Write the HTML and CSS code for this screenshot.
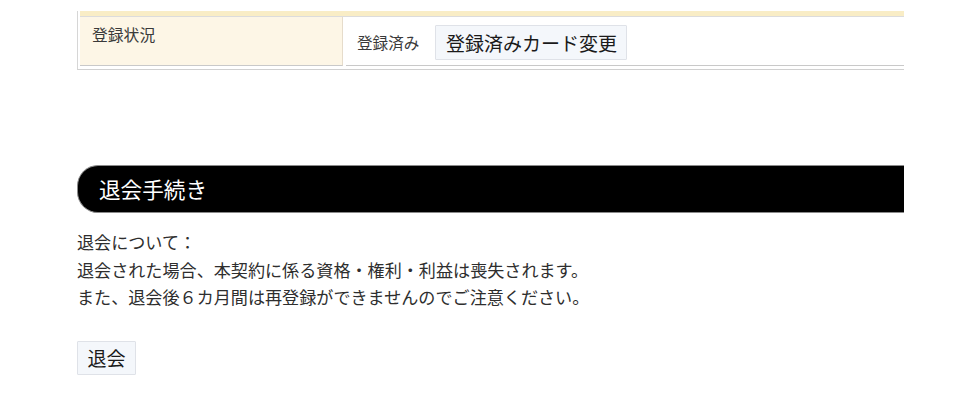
FILE: index.html
```html
<!DOCTYPE html>
<html lang="ja">
<head>
<meta charset="utf-8">
<link rel="stylesheet" href="styles.css">
</head>
<body>
<div class="page">
  <div class="tbl">
    <div class="stripe"></div>
    <div class="row">
      <div class="th">登録状況</div>
      <div class="td">
        <span class="status">登録済み</span>
        <button class="btn btn-card" type="button">登録済みカード変更</button>
      </div>
    </div>
  </div>

  <h2 class="section-title">退会手続き</h2>
  <div class="notice">
    <p>退会について：</p>
    <p>退会された場合、本契約に係る資格・権利・利益は喪失されます。</p>
    <p>また、退会後６カ月間は再登録ができませんのでご注意ください。</p>
  </div>
  <button class="btn btn-quit" type="button">退会</button>
</div>
</body>
</html>
```

FILE: styles.css
```css
* { box-sizing: border-box; }
html, body { margin: 0; padding: 0; background: #fff; }
body {
  font-family: "Noto Sans CJK JP", "Noto Sans", sans-serif;
  color: #333;
  width: 965px;
  height: 419px;
  overflow: hidden;
}
.page {
  padding: 11px 61px 0 77px;
}
.tbl {
  width: 827px;
  border-left: 1px solid #d6d6d6;
  border-bottom: 1px solid #d0d0d0;
  padding: 0 0 3px 2px;
}
.stripe {
  height: 6px;
  background: #f9edc6;
  border-bottom: 1px solid #dcdcdc;
}
.row {
  display: flex;
  gap: 3px;
}
.th {
  width: 263px;
  height: 49px;
  background: #fdf6e6;
  border-right: 1px solid #e6dccb;
  border-bottom: 1px solid #c9c9c9;
  padding: 8px 12px;
  font-size: 15.8px;
  line-height: 20px;
  color: #3a3a3a;
}
.td {
  flex: 1;
  height: 49px;
  border-bottom: 1px solid #c9c9c9;
  display: flex;
  align-items: center;
  gap: 16px;
  padding: 2px 0 0 11px;
}
.status {
  font-size: 15.6px;
  color: #3a3a3a;
}
.btn {
  font-family: "Noto Sans CJK JP", "Noto Sans", sans-serif;
  background: #f4f7fb;
  border: 1px solid #dfe2e8;
  border-radius: 1px;
  color: #1a1a1a;
  padding: 0;
  margin: 0;
  cursor: pointer;
}
.btn-card {
  width: 192px;
  height: 35px;
  font-size: 19px;
  line-height: 33px;
}
.section-title {
  margin: 95px 0 0 0;
  width: 827px;
  height: 48px;
  background: #000;
  border: 1px solid #8a8a8a;
  border-right: none;
  border-radius: 21px 0 0 21px;
  color: #fff;
  font-weight: normal;
  font-size: 21.6px;
  line-height: 46px;
  padding-left: 21px;
}
.notice {
  margin-top: 15px;
  font-size: 17.1px;
  line-height: 27.5px;
  color: #2e2e2e;
}
.notice p { margin: 0; }
.btn-quit {
  display: block;
  margin-top: 30px;
  width: 59px;
  height: 34px;
  font-size: 19px;
  line-height: 32px;
}
```
